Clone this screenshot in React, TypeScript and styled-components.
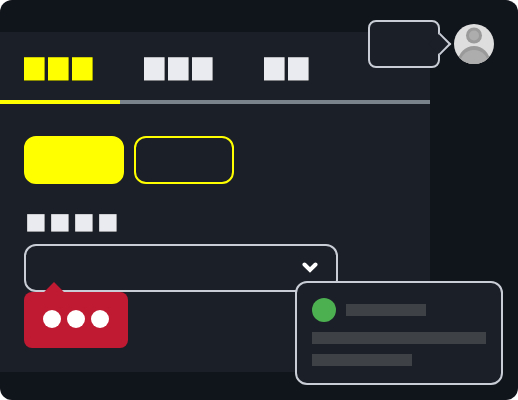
import React from "react";
import styled, { createGlobalStyle } from "styled-components";

const GlobalStyle = createGlobalStyle`
  html, body {
    margin: 0;
    padding: 0;
    background: #ffffff;
    font-family: "Liberation Sans", Arial, sans-serif;
  }
`;

const Frame = styled.div`
  position: relative;
  display: flex;
  width: 518px;
  height: 400px;
  border-radius: 12px;
  overflow: hidden;
  background: #10141b;
`;

const Panel = styled.main`
  width: 430px;
  height: 340px;
  margin-top: 32px;
  background: #1b1f27;
`;

const Tabs = styled.div`
  display: flex;
  height: 72px;
  box-shadow: inset 0 -4px 0 #7a828c;
`;

const Tab = styled.div<{ $active?: boolean }>`
  display: flex;
  gap: 3px;
  width: 120px;
  box-sizing: border-box;
  padding: 25px 0 0 24px;
  height: 72px;
  color: ${(p) => (p.$active ? "#ffff00" : "#e9ebf0")};
  border-bottom: 4px solid ${(p) => (p.$active ? "#ffff00" : "transparent")};
`;

const TabGlyph = styled.span`
  width: 21px;
  height: 24px;
  background: currentColor;
  box-shadow:
    inset 0 1px 0 rgba(0, 0, 0, 0.2),
    inset -1px 0 0 rgba(0, 0, 0, 0.35),
    inset 0 -1px 0 rgba(0, 0, 0, 0.45);
`;

const Content = styled.div`
  display: flex;
  flex-direction: column;
  padding: 32px 24px 0;
`;

const Buttons = styled.div`
  display: flex;
  gap: 10px;
`;

const Button = styled.button<{ $outline?: boolean }>`
  width: 100px;
  height: 48px;
  padding: 0;
  border-radius: 12px;
  border: 2px solid #ffff00;
  background: ${(p) => (p.$outline ? "transparent" : "#ffff00")};
`;

const Label = styled.div`
  display: flex;
  gap: 6px;
  margin: 30px 0 12px 3px;
`;

const LabelGlyph = styled.span`
  width: 18px;
  height: 18px;
  box-sizing: border-box;
  background: #e9ebf0;
  box-shadow:
    inset 0 1px 0 rgba(0, 0, 0, 0.12),
    inset 1px 0 0 rgba(0, 0, 0, 0.12),
    inset -1px 0 0 rgba(0, 0, 0, 0.35),
    inset 0 -1px 0 rgba(0, 0, 0, 0.35);
`;

const Field = styled.div`
  position: relative;
  display: flex;
  align-items: center;
  justify-content: flex-end;
  width: 314px;
  height: 48px;
  box-sizing: border-box;
  padding-right: 18px;
  border: 2px solid #c9cdd5;
  border-radius: 12px;
`;

const ErrorBubble = styled.div`
  position: absolute;
  left: -2px;
  top: 46px;
  display: flex;
  gap: 6px;
  align-items: center;
  justify-content: center;
  width: 104px;
  height: 56px;
  box-sizing: border-box;
  padding-bottom: 2px;
  border-radius: 8px;
  background: #c01a33;

  &::before {
    content: "";
    position: absolute;
    left: 23px;
    top: -7px;
    width: 14px;
    height: 14px;
    background: #c01a33;
    transform: rotate(45deg);
  }
`;

const ErrorDot = styled.span`
  width: 18px;
  height: 18px;
  border-radius: 50%;
  background: #ffffff;
`;

const Side = styled.aside`
  position: relative;
  flex: 1;
  padding: 24px 0 0 24px;
`;

const SpeechBubble = styled.div`
  position: absolute;
  left: -62px;
  top: 20px;
  width: 72px;
  height: 48px;
  box-sizing: border-box;
  border: 2px solid #c9cdd5;
  border-radius: 8px;
  background: #1b1f27;

  &::after {
    content: "";
    position: absolute;
    right: -10px;
    top: 14px;
    width: 16px;
    height: 16px;
    box-sizing: border-box;
    background: #1b1f27;
    border: solid #c9cdd5;
    border-width: 2px 2px 0 0;
    transform: rotate(45deg);
  }
`;

const Card = styled.div`
  position: absolute;
  left: 295px;
  top: 281px;
  display: flex;
  flex-direction: column;
  gap: 10px;
  width: 208px;
  height: 104px;
  box-sizing: border-box;
  padding: 15px;
  border: 2px solid #c9cdd5;
  border-radius: 12px;
  background: #1b1f27;
`;

const CardHead = styled.div`
  display: flex;
  align-items: center;
  gap: 10px;
`;

const StatusDot = styled.span`
  width: 24px;
  height: 24px;
  border-radius: 50%;
  background: #4caf50;
`;

const Skeleton = styled.div<{ $w: number }>`
  width: ${(p) => p.$w}px;
  height: 12px;
  background: #3e4146;
`;

const Avatar = () => (
  <svg width="40" height="40" viewBox="0 0 40 40" style={{ display: "block" }}>
    <defs>
      <clipPath id="avatar-clip">
        <circle cx="20" cy="20" r="20" />
      </clipPath>
    </defs>
    <g clipPath="url(#avatar-clip)">
      <rect width="40" height="40" fill="#dedede" />
      <circle cx="20" cy="11.5" r="8" fill="#9a9a9a" />
      <circle cx="20" cy="11.5" r="5" fill="#adadad" />
      <circle cx="20" cy="38" r="16" fill="#9a9a9a" />
      <circle cx="20" cy="40" r="14" fill="#adadad" />
    </g>
  </svg>
);

const Chevron = () => (
  <svg width="16" height="12" viewBox="0 0 16 12">
    <path d="M2.5 2.5 L8 8 L13.5 2.5" fill="none" stroke="#ffffff" strokeWidth="4" strokeLinecap="round" strokeLinejoin="miter" />
  </svg>
);

const tabs = [3, 3, 2];

export default function App() {
  return (
    <>
      <GlobalStyle />
      <Frame>
        <Panel>
          <Tabs>
            {tabs.map((count, i) => (
              <Tab key={i} $active={i === 0}>
                {Array.from({ length: count }).map((_, j) => (
                  <TabGlyph key={j} />
                ))}
              </Tab>
            ))}
          </Tabs>
          <Content>
            <Buttons>
              <Button />
              <Button $outline />
            </Buttons>
            <Label>
              <LabelGlyph />
              <LabelGlyph />
              <LabelGlyph />
              <LabelGlyph />
            </Label>
            <Field>
              <Chevron />
              <ErrorBubble>
                <ErrorDot />
                <ErrorDot />
                <ErrorDot />
              </ErrorBubble>
            </Field>
          </Content>
        </Panel>
        <Side>
          <SpeechBubble />
          <Avatar />
        </Side>
        <Card>
          <CardHead>
            <StatusDot />
            <Skeleton $w={80} />
          </CardHead>
          <Skeleton $w={174} />
          <Skeleton $w={100} />
        </Card>
      </Frame>
    </>
  );
}
